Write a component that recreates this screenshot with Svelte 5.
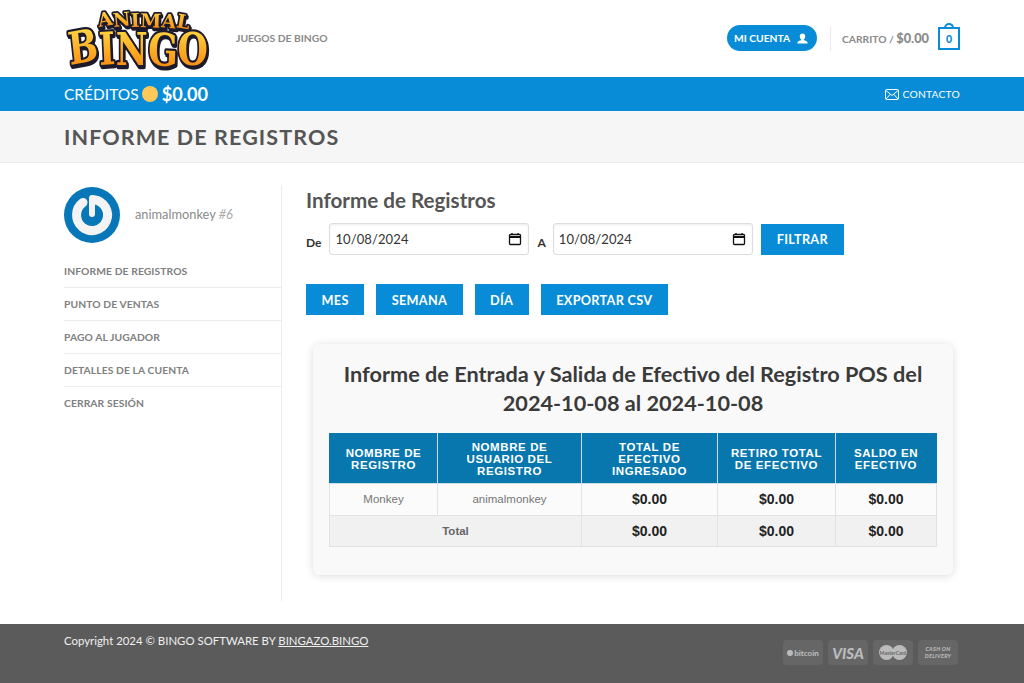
<script lang="ts">
	const menu = ['Informe de Registros', 'Punto de Ventas', 'Pago al Jugador', 'Detalles de la Cuenta', 'Cerrar Sesión'];
	const ranges = ['Mes', 'Semana', 'Día', 'Exportar CSV'];
	const headers = ['Nombre de Registro', 'Nombre de Usuario del Registro', 'Total de Efectivo Ingresado', 'Retiro Total de Efectivo', 'Saldo en Efectivo'];
</script>

<header class="top">
	<div class="wrap top-in">
		<svg class="logo" viewBox="0 0 150 72" width="150" height="72" aria-label="Animal Bingo">
			<defs>
				<linearGradient id="gold" x1="0" y1="0" x2="0" y2="1">
					<stop offset="0.1" stop-color="#ffdc45" />
					<stop offset="0.9" stop-color="#f8850c" />
				</linearGradient>
			</defs>
			<g class="logo-type" text-anchor="middle">
				<text x="80" y="24" font-size="19" textLength="90" lengthAdjust="spacingAndGlyphs" rotate="-10 -6 -2 2 6 10" fill="url(#gold)" stroke="#1d1a2b" stroke-width="3.500">ANIMAL</text>
				<text x="75" y="62" font-size="45" textLength="138" lengthAdjust="spacingAndGlyphs" rotate="-8 -3 0 2 0" fill="url(#gold)" stroke="#1d1a2b" stroke-width="4.500">BINGO</text>
			</g>
		</svg>
		<a class="nav" href="#juegos">Juegos de Bingo</a>
		<div class="spacer"></div>
		<button class="account">
			Mi Cuenta
			<svg viewBox="0 0 12 12" width="11" height="11"><path fill="#fff" d="M6 .5c1.900 0 3 1.400 3 3.200 0 1.300-.6 2.500-1.500 3.100v1c1.300.5 4 1.100 4 2.600v1H.5v-1c0-1.500 2.700-2.100 4-2.600v-1C3.600 6.200 3 5 3 3.700 3 1.900 4.100.5 6 .5z"/></svg>
		</button>
		<span class="divider"></span>
		<span class="cart">Carrito / <b>$0.00</b></span>
		<span class="bag"><i></i>0</span>
	</div>
</header>

<div class="bluebar">
	<div class="wrap blue-in">
		<span class="credits">Créditos</span>
		<span class="coin"></span>
		<b class="amount">$0.00</b>
		<div class="spacer"></div>
		<svg viewBox="0 0 14 11" width="14" height="11" fill="none" stroke="#fff" stroke-width="1"><rect x=".5" y=".5" width="13" height="10" rx="1"/><path d="M1 1.500l6 5 6-5M1 10l4.500-5M13 10L8.500 5"/></svg>
		<a class="contact" href="#contacto">Contacto</a>
	</div>
</div>

<div class="titlebar">
	<div class="wrap"><h1>Informe de Registros</h1></div>
</div>

<main class="wrap content">
	<aside>
		<div class="user">
			<svg viewBox="0 0 56 56" width="56" height="56">
				<circle cx="28" cy="28" r="28" fill="#0877b8" />
				<path d="M19 15.500A15.500 15.500 0 1 0 30 12.700" fill="none" stroke="#f3f3f3" stroke-width="9" stroke-linecap="round" />
				<path d="M28 11v16" fill="none" stroke="#f3f3f3" stroke-width="6" stroke-linecap="round" />
			</svg>
			<span class="uname">animalmonkey <em>#6</em></span>
		</div>
		<ul>
			{#each menu as item}
				<li><a href="#m">{item}</a></li>
			{/each}
		</ul>
	</aside>

	<section>
		<h2>Informe de Registros</h2>
		<div class="filters">
			<label for="from">De</label>
			<div id="from" class="date">10/08/2024
				<svg viewBox="0 0 14 14" width="14" height="14" fill="none" stroke="#111"><rect x="1.500" y="2.500" width="11" height="10" rx="1" stroke-width="1.300"/><path d="M1.500 5h11" stroke-width="2"/><path d="M4 1v2M10 1v2" stroke-width="1.300"/></svg>
			</div>
			<label for="to">A</label>
			<div id="to" class="date">10/08/2024
				<svg viewBox="0 0 14 14" width="14" height="14" fill="none" stroke="#111"><rect x="1.500" y="2.500" width="11" height="10" rx="1" stroke-width="1.300"/><path d="M1.500 5h11" stroke-width="2"/><path d="M4 1v2M10 1v2" stroke-width="1.300"/></svg>
			</div>
			<button class="btn filter">Filtrar</button>
		</div>
		<div class="ranges">
			{#each ranges as r}
				<button class="btn">{r}</button>
			{/each}
		</div>

		<div class="card">
			<h3>Informe de Entrada y Salida de Efectivo del Registro POS del 2024-10-08 al 2024-10-08</h3>
			<table>
				<colgroup>
					<col class="c1" /><col class="c2" /><col class="c3" /><col class="c4" /><col />
				</colgroup>
				<thead>
					<tr>
						{#each headers as h}
							<th>{h}</th>
						{/each}
					</tr>
				</thead>
				<tbody>
					<tr>
						<td>Monkey</td><td>animalmonkey</td>
						<td class="num">$0.00</td><td class="num">$0.00</td><td class="num">$0.00</td>
					</tr>
					<tr class="total">
						<td colspan="2"><b>Total</b></td>
						<td class="num">$0.00</td><td class="num">$0.00</td><td class="num">$0.00</td>
					</tr>
				</tbody>
			</table>
		</div>
	</section>
</main>

<footer>
	<div class="wrap foot-in">
		<span class="copy">Copyright 2024 © BINGO SOFTWARE BY <u>BINGAZO.BINGO</u></span>
		<div class="pays">
			<span class="pay btc"><i></i>bitcoin</span>
			<span class="pay visa">VISA</span>
			<span class="pay mc"><i></i><i></i><small>MasterCard</small></span>
			<span class="pay cod">CASH ON<br />DELIVERY</span>
		</div>
	</div>
</footer>

<style>
	:global(body) {
		margin: 0;
		font-family: 'Lato', sans-serif;
		color: #666;
		background: #fff;
	}
	* {
		box-sizing: border-box;
	}
	a {
		color: inherit;
		text-decoration: none;
	}
	.wrap {
		width: 896px;
		margin: 0 auto;
	}
	.spacer {
		flex: 1;
	}
	.top {
		height: 77px;
	}
	.top-in {
		display: flex;
		align-items: center;
		height: 77px;
	}
	.logo {
		margin-right: 22px;
		flex: none;
		overflow: visible;
	}
	.logo-type {
		font-family: 'DejaVu Serif', serif;
		font-weight: 700;
		stroke-linejoin: round;
		paint-order: stroke;
		filter: drop-shadow(1px 2px 0 #1d1a2b);
	}
	.nav {
		font-size: 10.300px;
		font-weight: 700;
		color: #8a8a8a;
		text-transform: uppercase;
		margin-top: -1px;
	}
	.account {
		display: flex;
		align-items: center;
		gap: 7px;
		height: 26px;
		padding: 0 7px;
		width: 90px;
		margin-top: -1px;
		border: 0;
		border-radius: 13px;
		background: #088cd8;
		color: #fff;
		font: 700 10.300px 'Lato', sans-serif;
		text-transform: uppercase;
		white-space: nowrap;
	}
	.account svg {
		flex: none;
	}
	.divider {
		width: 1px;
		height: 24px;
		background: #ececec;
		margin: 0 11px 0 13px;
	}
	.cart {
		font-size: 10.300px;
		font-weight: 700;
		color: #8a8a8a;
		text-transform: uppercase;
		white-space: nowrap;
		margin-top: -2px;
	}
	.cart b {
		font-size: 12.800px;
	}
	.bag {
		position: relative;
		width: 22px;
		height: 23px;
		margin-left: 9px;
		border: 2px solid #088cd8;
		color: #088cd8;
		font-size: 10.500px;
		font-weight: 900;
		display: flex;
		align-items: center;
		justify-content: center;
	}
	.bag i {
		position: absolute;
		left: 4px;
		top: -6px;
		width: 10px;
		height: 6px;
		border: 2px solid #088cd8;
		border-bottom: 0;
		border-radius: 5px 5px 0 0;
	}
	.bluebar {
		background: #088cd8;
		height: 34px;
		color: #fff;
	}
	.blue-in {
		display: flex;
		align-items: center;
		height: 34px;
	}
	.credits {
		font-size: 15.500px;
		text-transform: uppercase;
	}
	.coin {
		width: 16px;
		height: 16px;
		border-radius: 50%;
		background: #ffc857;
		margin: 0 4px 0 3px;
	}
	.amount {
		font-size: 18.200px;
		font-weight: 700;
	}
	.contact {
		font-size: 10.300px;
		font-weight: 400;
		text-transform: uppercase;
		margin-left: 4px;
		letter-spacing: 0.200px;
	}
	.titlebar {
		height: 52px;
		background: #f6f6f6;
		border-bottom: 1px solid #ececec;
		display: flex;
		align-items: center;
	}
	h1 {
		margin: 0;
		font-size: 21.500px;
		font-weight: 700;
		color: #555;
		text-transform: uppercase;
		letter-spacing: 1.100px;
	}
	.content {
		display: flex;
		height: 461px;
		padding-top: 22px;
	}
	aside {
		width: 218px;
		height: 416px;
		border-right: 1px solid #ececec;
		flex: none;
	}
	.user {
		display: flex;
		align-items: center;
		gap: 15px;
		margin-top: 2px;
		margin-bottom: 11px;
	}
	.uname {
		font-size: 12.800px;
		color: #8a8a8a;
		margin-top: -2px;
	}
	.uname em {
		color: #aaa;
		font-style: italic;
	}
	ul {
		list-style: none;
		margin: 0;
		padding: 0;
	}
	li {
		height: 33px;
		display: flex;
		align-items: center;
		border-top: 1px solid #ececec;
		font-size: 10.300px;
		font-weight: 700;
		color: #808080;
		text-transform: uppercase;
		letter-spacing: 0.100px;
	}
	li:first-child {
		border-top: 0;
	}
	section {
		margin-left: 24px;
		flex: 1;
	}
	h2 {
		margin: 2px 0 10px;
		font-size: 20.600px;
		line-height: 26px;
		font-weight: 700;
		color: #555;
	}
	.filters {
		display: flex;
		align-items: center;
		height: 32px;
	}
	label {
		font-size: 12px;
		font-weight: 700;
		color: #333;
		margin-top: 6px;
	}
	.date {
		width: 200px;
		height: 32px;
		border: 1px solid #ddd;
		border-radius: 3px;
		box-shadow: inset 0 1px 2px rgba(0, 0, 0, 0.08);
		margin: 0 8px;
		padding: 0 6px 0 5px;
		display: flex;
		align-items: center;
		justify-content: space-between;
		font-size: 13px;
		color: #333;
		letter-spacing: 0.100px;
	}
	#to {
		margin-left: 7px;
	}
	.btn {
		height: 31px;
		padding: 0 15.500px;
		border: 0;
		background: #088cd8;
		color: #fff;
		font: 700 12.700px 'Lato', sans-serif;
		letter-spacing: 0.300px;
		text-transform: uppercase;
	}
	.filter {
		width: 83px;
		padding: 0;
	}
	.ranges {
		display: flex;
		gap: 12px;
		margin-top: 29px;
	}
	.card {
		width: 640px;
		height: 231px;
		margin: 29px 0 0 7px;
		padding: 16px 16px 0;
		background: #f9f9f9;
		border-radius: 6px;
		box-shadow: 0 1px 8px rgba(0, 0, 0, 0.14);
	}
	h3 {
		margin: 0 0 15px;
		font-size: 21.700px;
		line-height: 29px;
		font-weight: 700;
		color: #3a3a3a;
		text-align: center;
	}
	table {
		width: 608px;
		table-layout: fixed;
		border-collapse: collapse;
		font-family: 'Liberation Sans', sans-serif;
	}
	.c1 {
		width: 108px;
	}
	.c2 {
		width: 144px;
	}
	.c3 {
		width: 136px;
	}
	.c4 {
		width: 118px;
	}
	th {
		background: #0877ae;
		color: #fff;
		height: 50px;
		padding: 0 8px;
		font-size: 11.500px;
		line-height: 12px;
		font-weight: 700;
		letter-spacing: 0.600px;
		text-transform: uppercase;
		border: 1px solid #d0dde5;
		border-top-color: #0877ae;
	}
	th:first-child {
		border-left-color: #0877ae;
	}
	th:last-child {
		border-right-color: #0877ae;
	}
	td {
		height: 31.500px;
		border: 1px solid #e2e2e2;
		background: #fbfbfb;
		text-align: center;
		font-size: 11.500px;
		color: #777;
	}
	.num {
		font-size: 14px;
		font-weight: 700;
		color: #222;
	}
	.total td {
		background: #f1f1f1;
	}
	.total b {
		color: #666;
	}
	footer {
		height: 59px;
		background: #5b5b5b;
		color: #f0f0f0;
	}
	.foot-in {
		display: flex;
		justify-content: space-between;
		padding-top: 9px;
	}
	.copy {
		font-size: 11.400px;
		line-height: 16px;
	}
	.pays {
		display: flex;
		gap: 5px;
		margin: 7px 2px 0 0;
	}
	.pay {
		position: relative;
		width: 40px;
		height: 25px;
		border-radius: 4px;
		background: #666;
		color: #bbb;
		display: flex;
		align-items: center;
		justify-content: center;
		font-weight: 900;
		text-align: center;
	}
	.btc {
		font-size: 8px;
		gap: 1px;
	}
	.btc i {
		width: 6px;
		height: 6px;
		border-radius: 50%;
		background: #bbb;
	}
	.visa {
		font-size: 15px;
		font-style: italic;
	}
	.mc i {
		position: absolute;
		top: 5px;
		width: 15px;
		height: 15px;
		border-radius: 50%;
		background: #bbb;
		left: 6px;
	}
	.mc i + i {
		left: 19px;
	}
	.mc small {
		position: relative;
		font-size: 5px;
		color: #666;
		font-weight: 700;
	}
	.cod {
		font-size: 5.500px;
		line-height: 7px;
		font-style: italic;
		letter-spacing: 0.300px;
	}
</style>
